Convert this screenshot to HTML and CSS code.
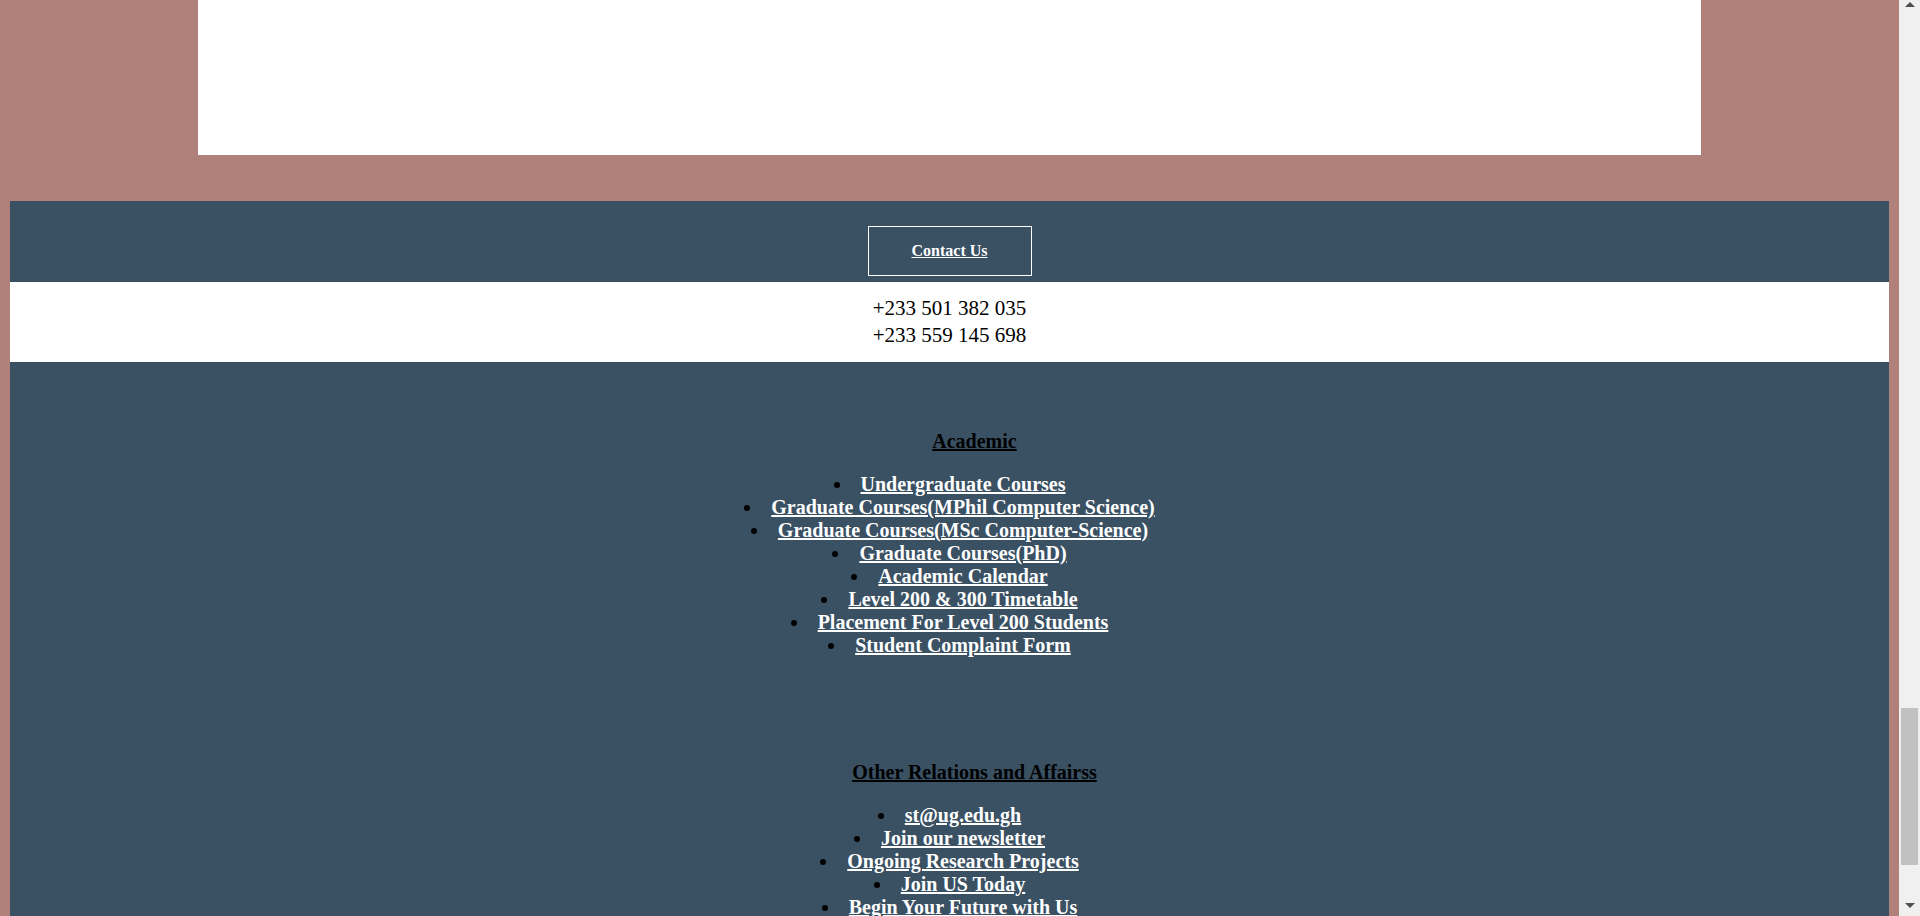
FILE: index.html
```html
<!DOCTYPE html>
<html lang="en">
<head>
<meta charset="utf-8">
<title>Department of Computer Science</title>
<link rel="stylesheet" href="styles.css">
</head>
<body>
<div class="page">
  <div class="main"></div>
  <footer class="footer">
    <div class="contact-bar">
      <a class="contact-btn" href="#">Contact Us</a>
    </div>
    <div class="phones">
      <div>+233 501 382 035</div>
      <div>+233 559 145 698</div>
    </div>
    <div class="links">
      <div class="group">
        <h3 class="group-title">Academic</h3>
        <ul class="group-list">
          <li><a href="#">Undergraduate Courses</a></li>
          <li><a href="#">Graduate Courses(MPhil Computer Science)</a></li>
          <li><a href="#">Graduate Courses(MSc Computer-Science)</a></li>
          <li><a href="#">Graduate Courses(PhD)</a></li>
          <li><a href="#">Academic Calendar</a></li>
          <li><a href="#">Level 200 &amp; 300 Timetable</a></li>
          <li><a href="#">Placement For Level 200 Students</a></li>
          <li><a href="#">Student Complaint Form</a></li>
        </ul>
      </div>
      <div class="group">
        <h3 class="group-title">Other Relations and Affairss</h3>
        <ul class="group-list">
          <li><a href="#">st@ug.edu.gh</a></li>
          <li><a href="#">Join our newsletter</a></li>
          <li><a href="#">Ongoing Research Projects</a></li>
          <li><a href="#">Join US Today</a></li>
          <li><a href="#">Begin Your Future with Us</a></li>
        </ul>
      </div>
    </div>
  </footer>
</div>
<div class="scrollbar" aria-hidden="true">
  <svg class="sb-arrow sb-up" width="10" height="5" viewBox="0 0 10 5"><polygon points="0,5 5,0 10,5" fill="#505050"/></svg>
  <div class="sb-thumb"></div>
  <svg class="sb-arrow sb-down" width="10" height="5" viewBox="0 0 10 5"><polygon points="0,0 10,0 5,5" fill="#505050"/></svg>
</div>
</body>
</html>
```

FILE: styles.css
```css
body {
  margin: 0;
  padding-right: 21px;
  background: #af817a;
  font-family: "Liberation Serif", "Times New Roman", serif;
}

.page {
  margin: 0 10px;
}

.main {
  width: 80%;
  height: 155px;
  margin: 0 auto 46px;
  background: #ffffff;
}

.footer {
  background: #3a5063;
  padding-bottom: 196px;
}

.contact-bar {
  padding: 25px 0 6px;
  text-align: center;
}

.contact-btn {
  display: inline-block;
  border: 1px solid #ffffff;
  padding: 15px 43px;
  color: #ffffff;
  font-size: 16px;
  line-height: 18px;
  font-weight: bold;
  text-decoration: underline;
}

.phones {
  background: #ffffff;
  color: #000000;
  text-align: center;
  font-size: 21px;
  line-height: 27px;
  padding: 13px 0 13px;
}

.links {
  padding-top: 68px;
}

.group + .group {
  margin-top: 104px;
}

.group-title {
  margin: 0 0 20px;
  padding-left: 50px;
  font-size: 20px;
  line-height: 23px;
  font-weight: bold;
  color: #000000;
  text-align: center;
  text-decoration: underline;
}

.group-list {
  list-style: disc inside;
  margin: 0;
  padding: 0;
  text-align: center;
  font-size: 20px;
  line-height: 23px;
  font-weight: bold;
  color: #000000;
}

.group-list a {
  color: #ffffff;
}

/* static picture of the browser's vertical scrollbar */
.scrollbar {
  position: fixed;
  top: 0;
  right: 0;
  width: 21px;
  height: 100%;
  background: #f0f0f0;
  display: flex;
  flex-direction: column;
  align-items: center;
}

.sb-arrow {
  display: block;
  flex: none;
}

.sb-up {
  margin-top: 2px;
}

.sb-thumb {
  width: 17px;
  height: 157px;
  margin-top: 701px;
  background: #c1c1c1;
}

.sb-down {
  margin-top: auto;
  margin-bottom: 8px;
}
```
